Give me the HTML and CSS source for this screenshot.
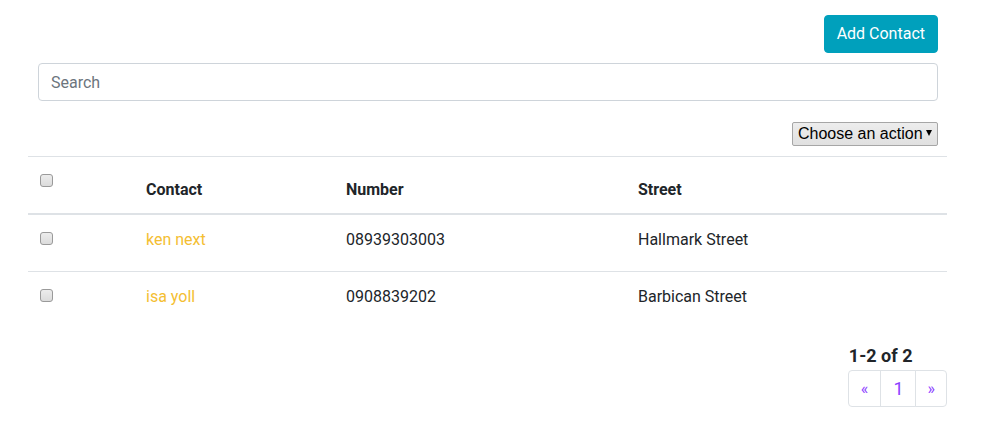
FILE: index.html
```html
<!DOCTYPE html>
<html lang="en">
<head>
<meta charset="utf-8">
<title>Contacts</title>
<link rel="stylesheet" href="styles.css">
</head>
<body>
<div class="page">
  <div class="toolbar">
    <div class="actions">
      <button class="btn-add" type="button">Add Contact</button>
    </div>
    <input class="search" type="text" placeholder="Search">
    <div class="bulk">
      <div class="select-wrap">
        <select class="action-select">
          <option>Choose an action</option>
        </select>
        <span class="caret"></span>
      </div>
    </div>
  </div>
  <table class="contacts">
    <colgroup>
      <col class="c-check">
      <col class="c-contact">
      <col class="c-number">
      <col class="c-street">
    </colgroup>
    <thead>
      <tr>
        <th class="cell-check"><div class="check-box"><input type="checkbox" class="cb"></div></th>
        <th>Contact</th>
        <th>Number</th>
        <th>Street</th>
      </tr>
    </thead>
    <tbody>
      <tr>
        <td class="cell-check"><div class="check-box"><input type="checkbox" class="cb"></div></td>
        <td><a href="#" class="name">ken next</a></td>
        <td>08939303003</td>
        <td>Hallmark Street</td>
      </tr>
      <tr>
        <td class="cell-check"><div class="check-box"><input type="checkbox" class="cb"></div></td>
        <td><a href="#" class="name">isa yoll</a></td>
        <td>0908839202</td>
        <td>Barbican Street</td>
      </tr>
    </tbody>
  </table>
  <div class="footer">
    <div class="pager-block">
      <div class="count">1-2 of 2</div>
      <ul class="pagination">
        <li><a href="#" class="page-link prev">&laquo;</a></li>
        <li><a href="#" class="page-link num">1</a></li>
        <li><a href="#" class="page-link next">&raquo;</a></li>
      </ul>
    </div>
  </div>
</div>
</body>
</html>
```

FILE: styles.css
```css
* { box-sizing: border-box; }
html, body { margin: 0; padding: 0; background: #fff; }
body {
  font-family: Roboto, "Liberation Sans", sans-serif;
  font-size: 16px;
  line-height: 24px;
  color: #212529;
}
.page {
  padding: 0 43px 0 28px;
}
.toolbar {
  padding: 15px 9px 0 10px;
}
.actions {
  display: flex;
  justify-content: flex-end;
}
.btn-add {
  font-family: Roboto, "Liberation Sans", sans-serif;
  font-size: 16px;
  line-height: 24px;
  height: 38px;
  padding: 6px 12px;
  color: #fff;
  background: #00a0bc;
  border: 1px solid #00a0bc;
  border-radius: 4px;
}
.search {
  display: block;
  width: 100%;
  margin-top: 10px;
  height: 38px;
  padding: 6px 12px;
  font-family: Roboto, "Liberation Sans", sans-serif;
  font-size: 16px;
  color: #495057;
  border: 1px solid #ced4da;
  border-radius: 4px;
  outline: none;
}
.search::placeholder { color: #6c757d; opacity: 1; }
.bulk {
  display: flex;
  justify-content: flex-end;
  margin-top: 21px;
}
.select-wrap {
  position: relative;
  width: 146px;
  height: 24px;
}
.action-select {
  appearance: none;
  -webkit-appearance: none;
  width: 100%;
  height: 24px;
  margin: 0;
  padding: 0 0 0 5px;
  font-family: "Liberation Sans", Arial, sans-serif;
  font-size: 16px;
  line-height: 22px;
  color: #000;
  background: linear-gradient(#ededed, #e0e0e0);
  border: 1px solid #a6a6a6;
  border-radius: 2px;
}
.caret {
  position: absolute;
  right: 6px;
  top: 8px;
  width: 0;
  height: 0;
  border-left: 3px solid transparent;
  border-right: 3px solid transparent;
  border-top: 6px solid #000;
  pointer-events: none;
}
.contacts {
  width: 919px;
  margin-top: 10px;
  border-collapse: collapse;
  table-layout: fixed;
}
.c-check { width: 106px; }
.c-contact { width: 200px; }
.c-number { width: 292px; }
.c-street { width: 321px; }
.contacts th, .contacts td {
  padding: 13px 12px 11px;
  text-align: left;
  border-top: 1px solid #dee2e6;
}
.contacts th {
  font-weight: 700;
  vertical-align: bottom;
  border-bottom: 2px solid #dee2e6;
}
.contacts td { vertical-align: top; }
.contacts .cell-check { vertical-align: top; }
.check-box {
  height: 32px;
  padding-top: 4px;
}
.cb {
  appearance: none;
  -webkit-appearance: none;
  display: block;
  width: 13px;
  height: 13px;
  margin: 0;
  border: 1px solid #9a9a9a;
  border-radius: 3px;
  background: linear-gradient(#ececec, #dcdcdc);
}
.name {
  color: #f4be32;
  text-decoration: none;
}
.footer {
  display: flex;
  justify-content: flex-end;
  margin-top: 17px;
}
.count {
  font-size: 18px;
  font-weight: 700;
  line-height: 22px;
  padding-left: 1px;
}
.pagination {
  display: flex;
  list-style: none;
  margin: 3px 0 0;
  padding: 0;
}
.pagination li { margin-left: -1px; }
.pagination li:first-child { margin-left: 0; }
.page-link {
  display: block;
  height: 37px;
  padding: 0 12px;
  font-size: 16px;
  line-height: 35px;
  color: #8b3dff;
  text-decoration: none;
  border: 1px solid #dee2e6;
  background: #fff;
}
.page-link.prev { border-radius: 4px 0 0 4px; }
.page-link.next { border-radius: 0 4px 4px 0; padding: 0 11px 0 12px; }
.page-link.num { font-size: 18px; padding: 0 11px 0 12px; }
```
